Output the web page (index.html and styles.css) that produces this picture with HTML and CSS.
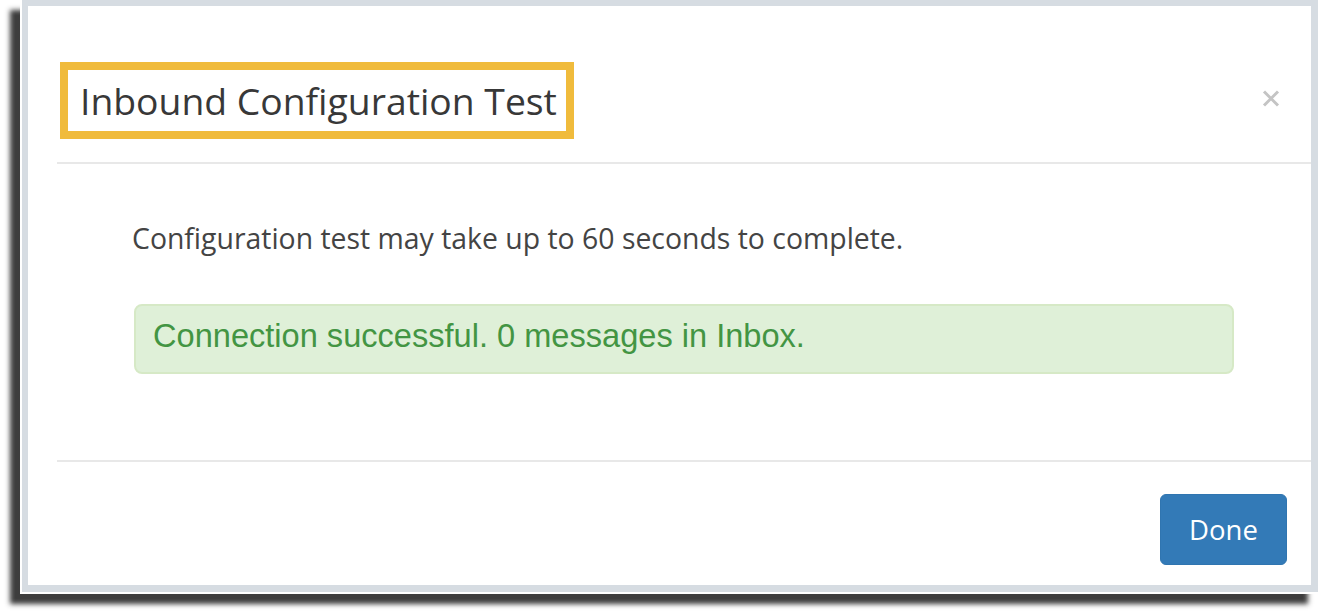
FILE: index.html
```html
<!DOCTYPE html>
<html>
<head>
<meta charset="utf-8">
<link rel="stylesheet" href="styles.css">
</head>
<body>
<div class="shot">
  <div class="frame">
    <div class="modal">
      <div class="modal-header">
        <h4 class="modal-title">Inbound Configuration Test</h4>
        <span class="close" aria-label="Close">
          <svg width="18" height="17" viewBox="0 0 18 17"><path d="M2 1.5 L16 15.5 M16 1.5 L2 15.5" stroke="#c4c4c4" stroke-width="3" fill="none"/></svg>
        </span>
      </div>
      <div class="modal-body">
        <p class="note">Configuration test may take up to 60 seconds to complete.</p>
        <div class="alert-success">Connection successful. 0 messages in Inbox.</div>
      </div>
      <div class="modal-footer">
        <button class="btn-primary">Done</button>
      </div>
    </div>
  </div>
</div>
</body>
</html>
```
FILE: styles.css
```css
html, body {
  margin: 0;
  padding: 0;
  background: #ffffff;
}
body {
  width: 1318px;
  height: 616px;
  overflow: hidden;
  font-family: "Open Sans", "Liberation Sans", sans-serif;
}
.shot {
  margin-left: 20px;
  width: 1298px;
  height: 594px;
  box-sizing: border-box;
  padding: 0 0 2px 2px;
  background: #ffffff;
  box-shadow: -10px 10px 5px rgba(40, 40, 40, 0.9);
}
.frame {
  box-sizing: border-box;
  width: 100%;
  height: 100%;
  border-style: solid;
  border-color: #d6dce2;
  border-width: 6px 7px 7px 6px;
  background: #ffffff;
  padding-left: 29px;
}
.modal {
  display: flex;
  flex-direction: column;
  height: 100%;
}
.modal-header {
  display: flex;
  justify-content: space-between;
  align-items: flex-start;
  height: 158px;
  box-sizing: border-box;
  padding-top: 56px;
  padding-left: 3px;
  border-bottom: 2px solid #e8e8e8;
}
.modal-title {
  margin: 0;
  display: inline-block;
  border: 8px solid #f0bb3c;
  padding: 6px 9px 5px 12px;
  font-size: 37.3px;
  line-height: 50px;
  font-weight: 400;
  color: #383838;
}
.close {
  display: block;
  margin-top: 28px;
  margin-right: 31px;
  line-height: 0;
}
.modal-body {
  height: 298px;
  box-sizing: border-box;
  padding: 55px 77px 0 75px;
  border-bottom: 2px solid #e8e8e8;
}
.note {
  margin: 0;
  font-size: 28.4px;
  line-height: 38px;
  color: #444444;
}
.alert-success {
  margin-top: 47px;
  margin-left: 2px;
  height: 70px;
  box-sizing: border-box;
  border: 2px solid #d6e9c6;
  border-radius: 8px;
  background: #dff0d8;
  color: #439543;
  font-family: "Liberation Sans", Arial, sans-serif;
  font-size: 32.6px;
  line-height: 34px;
  padding: 13px 18px 19px 17px;
}
.modal-footer {
  flex: 1;
  display: flex;
  justify-content: flex-end;
  align-items: flex-start;
  padding-top: 32px;
  padding-right: 24px;
}
.btn-primary {
  width: 127px;
  height: 71px;
  border: 1px solid #3075b0;
  border-radius: 6px;
  background: #337ab7;
  color: #ffffff;
  font-family: "Open Sans", "Liberation Sans", sans-serif;
  font-size: 27.5px;
  font-weight: 500;
  padding: 0;
  margin: 0;
}
```
